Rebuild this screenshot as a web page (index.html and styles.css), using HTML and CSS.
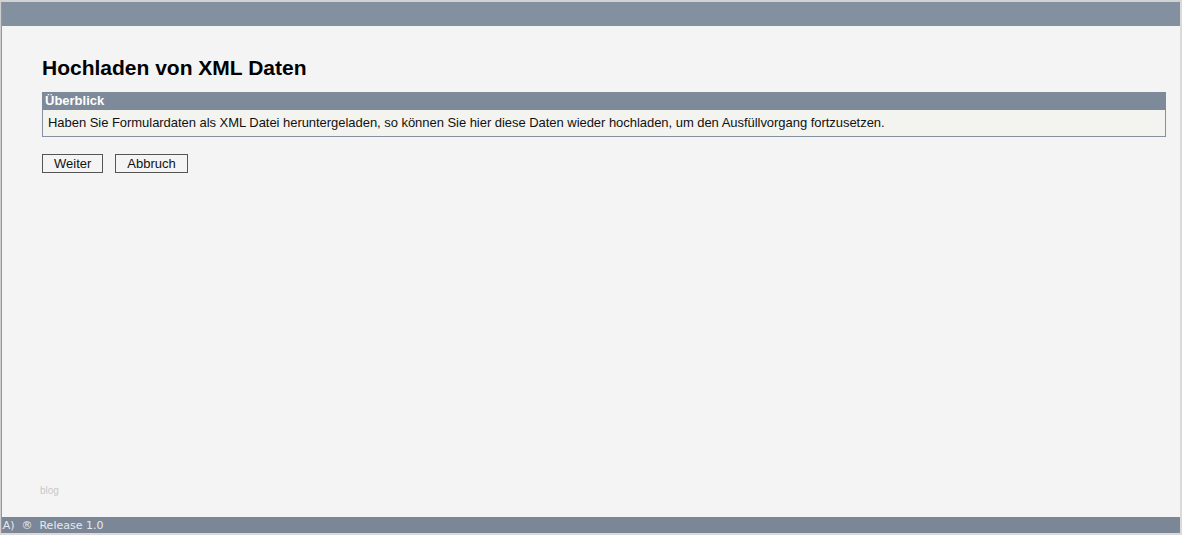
FILE: index.html
```html
<!DOCTYPE html>
<html lang="de">
<head>
<meta charset="utf-8">
<title>Hochladen von XML Daten</title>
<link rel="stylesheet" href="styles.css">
</head>
<body>
<div class="frame">
  <div class="inner">
    <div class="topbar"></div>
    <main class="main">
      <h1 class="title">Hochladen von XML Daten</h1>
      <section class="panel">
        <div class="panel-head">Überblick</div>
        <div class="panel-body">Haben Sie Formulardaten als XML Datei heruntergeladen, so können Sie hier diese Daten wieder hochladen, um den Ausfüllvorgang fortzusetzen.</div>
      </section>
      <div class="actions">
        <button class="btn" type="button">Weiter</button>
        <button class="btn" type="button">Abbruch</button>
      </div>
      <div class="blog">blog</div>
    </main>
    <footer class="footer"><span class="footer-text">(LA)  ®  Release 1.0</span></footer>
  </div>
</div>
</body>
</html>
```

FILE: styles.css
```css
html, body {
  margin: 0;
  padding: 0;
  background: #f4f4f4;
}

.frame {
  height: 535px;
  box-sizing: border-box;
  border-top: 2px solid #d2d2d2;
  border-left: 1px solid #cfcfcf;
  border-right: 2px solid #dadada;
  border-bottom: 2px solid #dadada;
  overflow: hidden;
}

.inner {
  height: 100%;
  display: flex;
  flex-direction: column;
  border-left: 1px solid #8d97a2;
  background: #f4f4f4;
}

.topbar {
  height: 24px;
  background: #8290a0;
  flex: none;
}

.main {
  flex: 1;
  display: flex;
  flex-direction: column;
  padding: 0 14px 0 40px;
  font-family: "Liberation Sans", Arial, sans-serif;
}

.title {
  margin: 30px 0 12px;
  font-size: 21px;
  line-height: 24px;
  font-weight: bold;
  color: #000;
}

.panel {
  display: flex;
  flex-direction: column;
}

.panel-head {
  height: 18px;
  line-height: 18px;
  background: #7d8a9a;
  color: #fff;
  font-weight: bold;
  font-size: 13px;
  padding-left: 3px;
}

.panel-body {
  border: 1px solid #8391a1;
  border-top: none;
  background: #f3f4f0;
  padding: 5px;
  font-size: 13px;
  line-height: 16px;
  letter-spacing: -0.04px;
  color: #111;
}

.actions {
  display: flex;
  gap: 12px;
  margin-top: 17px;
}

.btn {
  height: 19px;
  padding: 0 11px;
  border: 1px solid #555;
  background: #f4f4f4;
  font-family: "Liberation Sans", Arial, sans-serif;
  font-size: 13px;
  line-height: 17px;
  color: #111;
  border-radius: 0;
}

.blog {
  margin-top: auto;
  margin-bottom: 21px;
  margin-left: -2px;
  font-size: 10px;
  color: #c8c8c8;
}

.footer {
  height: 16px;
  box-sizing: border-box;
  padding-top: 2px;
  flex: none;
  background: #7b8797;
  overflow: hidden;
  font-family: "DejaVu Sans", Verdana, sans-serif;
  font-size: 11px;
  line-height: 14px;
  color: #e6e9ee;
  white-space: pre;
}

.footer-text {
  display: inline-block;
  margin-left: -10px;
}
```
